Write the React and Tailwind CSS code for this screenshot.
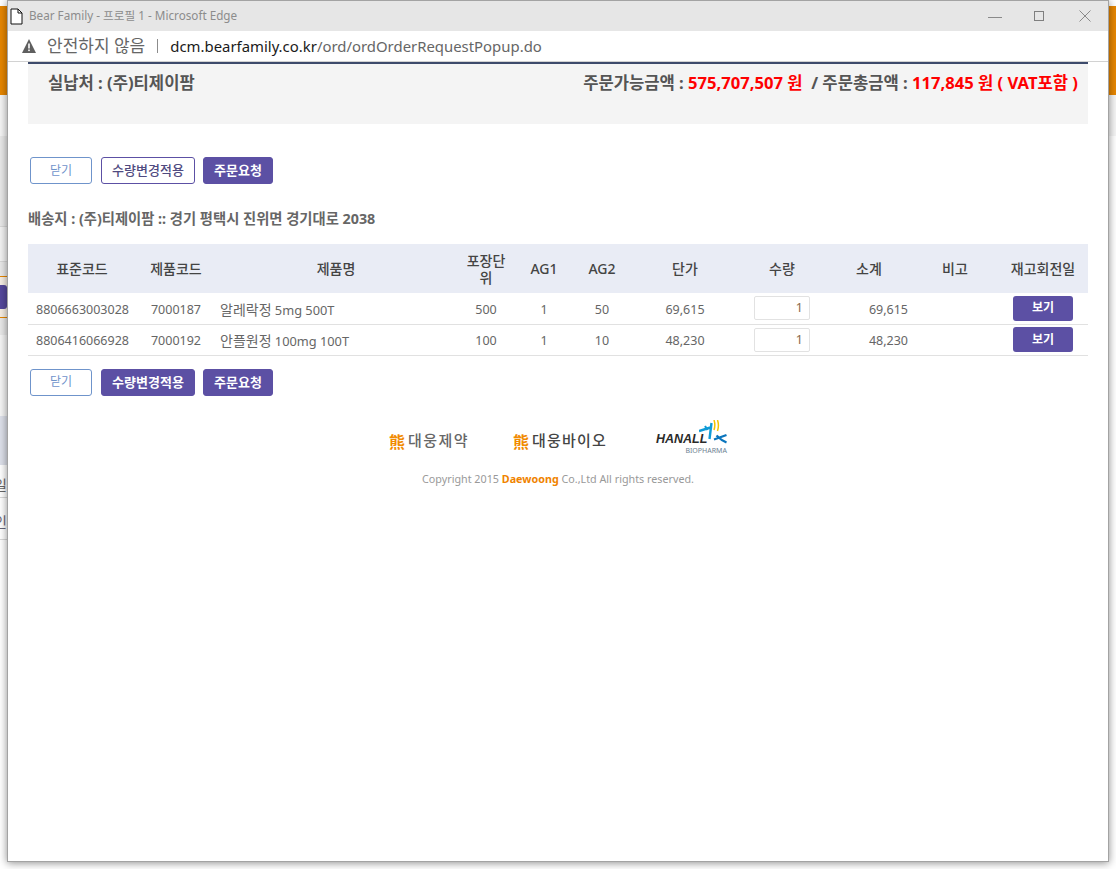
import React from "react";

const FONT = { fontFamily: '"Noto Sans", "Noto Sans CJK KR", sans-serif' };

const rows = [
  { std: "8806663003028", code: "7000187", kr: "알레락정", spec: "5mg 500T", unit: "500", ag1: "1", ag2: "50", price: "69,615", sum: "69,615" },
  { std: "8806416066928", code: "7000192", kr: "안플원정", spec: "100mg 100T", unit: "100", ag1: "1", ag2: "10", price: "48,230", sum: "48,230" },
];

function Bear() {
  return (
    <span className="w-[17px] text-center text-[16px] leading-[18px] font-bold text-[#f18a00]" style={{ fontFamily: '"Noto Sans CJK KR", sans-serif' }}>熊</span>
  );
}

function Hanall() {
  return (
    <svg width="28" height="26" viewBox="0 0 28 26" fill="none">
      <path d="M0 11 L13 7 M12.5 3 L10.5 19" stroke="#0f9bd7" strokeWidth="2.4" />
      <path d="M6 6 L8.5 10" stroke="#0f9bd7" strokeWidth="2" />
      <path d="M15 0 C16 3 16 7 15 10 M18.5 0 C19.5 3 19.5 8 18.5 11" stroke="#f4c400" strokeWidth="1.5" />
      <path d="M15 19.5 L27.5 15 M17.5 15.5 C20 18 24 21 27.5 22.5" stroke="#0a75bd" strokeWidth="2.3" />
    </svg>
  );
}

function Btn({ kind, children, className = "" }) {
  const styles = {
    close: "border-[#6f94cb] text-[#6f94cb] bg-white font-normal text-[12px]",
    outline: "border-[#5c50a4] text-[#4f4a80] bg-white font-medium text-[13px]",
    solid: "border-[#5c50a4] text-white bg-[#5c50a4] font-bold text-[13px]",
  };
  return (
    <button className={`h-[27px] rounded-[3px] border leading-none ${styles[kind]} ${className}`}>{children}</button>
  );
}

function ButtonRow({ second }) {
  return (
    <div className="flex gap-[9px] pl-[2px]">
      <Btn kind="close" className="w-[62px]">닫기</Btn>
      <Btn kind={second} className="w-[94px] mr-[-1px]">수량변경적용</Btn>
      <Btn kind="solid" className="w-[70px]">주문요청</Btn>
    </div>
  );
}

function LeftStrip() {
  return (
    <div className="w-[7px] shrink-0 flex flex-col overflow-hidden">
      <div className="h-[6px] bg-white" />
      <div className="h-[89px] bg-[#e68600]" />
      <div className="h-[41px] bg-[#f5f5f5]" />
      <div className="h-[91px] bg-[#e9e9e9] border-b border-[#d8d8d8]" />
      <div className="h-[35px] bg-[#f3f3f3] border-b border-[#d8d8d8]" />
      <div className="h-[14px] bg-[#e9e9e9]" />
      <div className="h-[42px] bg-[#f6eee4] border-y border-[#e68600] flex items-center">
        <div className="h-[24px] w-full bg-[#55489c] rounded-r-[3px]" />
      </div>
      <div className="h-[17px] bg-[#e9e9e9]" />
      <div className="h-[81px] bg-[#f5f5f5]" />
      <div className="h-[49px] bg-[#dde0ea]" />
      <div className="h-[33px] bg-white border-b border-[#d8d8d8] flex justify-end items-center overflow-hidden pt-[6px]">
        <span className="text-[14px] text-[#666] whitespace-nowrap">일</span>
      </div>
      <div className="h-[42px] bg-white border-b border-[#d8d8d8] flex justify-end items-center overflow-hidden pt-[6px]">
        <span className="text-[14px] text-[#667] whitespace-nowrap">인</span>
      </div>
    </div>
  );
}

function RightStrip() {
  return (
    <div className="w-[7px] shrink-0 flex flex-col">
      <div className="h-[6px] bg-white" />
      <div className="h-[89px] bg-[#e68600]" />
      <div className="h-[41px] bg-[#f5f5f5]" />
    </div>
  );
}

export default function App() {
  return (
    <div className="w-[1116px] h-[869px] flex bg-white overflow-hidden" style={FONT}>
      <LeftStrip />
      <div className="relative z-10 w-[1102px] h-[862px] shrink-0 bg-white border border-[#a3a3a3] shadow-[0_1px_8px_rgba(0,0,0,0.45)] flex flex-col overflow-hidden">
        {/* title bar */}
        <div className="h-[30px] shrink-0 bg-[#e6e6e6] flex items-center">
          <svg className="ml-[2px]" width="13" height="17" viewBox="0 0 13 17" fill="white" stroke="#111" strokeWidth="1">
            <path d="M1 1 H8 L12 5 V16 H1 Z" />
            <path d="M8 1 V5 H12" fill="none" />
          </svg>
          <span className="ml-[6px] text-[11.7px] text-[#8c8c8c]">Bear Family - 프로필 1 - Microsoft Edge</span>
          <div className="ml-auto flex items-center">
            <svg width="14" height="14" viewBox="0 0 14 14" stroke="#8a8a8a" fill="none"><path d="M0 8.5 H14" /></svg>
            <svg className="ml-[31px]" width="12" height="12" viewBox="0 0 12 12" stroke="#7f7f7f" fill="none"><rect x="1.5" y="1.5" width="9" height="9" /></svg>
            <svg className="ml-[33px] mr-[16px]" width="14" height="14" viewBox="0 0 14 14" stroke="#8a8a8a" fill="none"><path d="M1.5 1.5 L12.5 12.5 M12.5 1.5 L1.5 12.5" /></svg>
          </div>
        </div>
        {/* address bar */}
        <div className="h-[31px] shrink-0 bg-white border-b border-[#d2d2d2] flex items-center text-[14.9px]">
          <svg className="ml-[14px]" width="14" height="14" viewBox="0 0 14 14" fill="#5f5f5f">
            <path d="M7 0 L14 14 H0 Z" />
            <rect x="6.2" y="4.5" width="1.6" height="5" fill="white" />
            <rect x="6.2" y="10.5" width="1.6" height="1.6" fill="white" />
          </svg>
          <span className="ml-[11px] text-[#666] text-[17px]">안전하지 않음</span>
          <span className="ml-[12px] w-px h-[14px] bg-[#8c8c8c]" />
          <span className="ml-[12px] text-[#1a1a1a]">dcm.bearfamily.co.kr<span className="text-[#666]">/ord/ordOrderRequestPopup.do</span></span>
        </div>
        {/* content */}
        <div className="px-[20px] flex flex-col">
          <div className="h-[62px] shrink-0 bg-[#f4f4f4] border-t-2 border-[#3d4a6b] flex justify-between pl-[20px] pr-[10px] pt-[7px] text-[16.6px] font-bold text-[#555] leading-[24px]">
            <span>실납처 : (주)티제이팜</span>
            <span>
              주문가능금액 : <span className="text-[#ff0000]">575,707,507 원</span>&nbsp; / 주문총금액 : <span className="text-[#ff0000]">117,845 원 ( VAT포함 )</span>
            </span>
          </div>
          <div className="mt-[33px]"><ButtonRow second="outline" /></div>
          <div className="mt-[24px] h-[22px] text-[14.3px] font-bold text-[#666] leading-[22px]">배송지 : (주)티제이팜 :: 경기 평택시 진위면 경기대로 2038</div>
          <table className="mt-[14px] w-[1060px] table-fixed border-collapse text-[12.5px] text-[#666] text-center">
            <colgroup>
              {[108, 80, 240, 60, 56, 60, 106, 88, 86, 86, 90].map((w, i) => (
                <col key={i} style={{ width: w }} />
              ))}
            </colgroup>
            <thead>
              <tr className="h-[49px] bg-[#e9ecf5] text-[#444] text-[14px]">
                {["표준코드", "제품코드", "제품명"].map((h) => (
                  <th key={h} className="font-medium">{h}</th>
                ))}
                <th className="font-medium px-[6px] leading-[17px]">포장단위</th>
                {["AG1", "AG2", "단가", "수량", "소계", "비고", "재고회전일"].map((h) => (
                  <th key={h} className="font-medium">{h}</th>
                ))}
              </tr>
            </thead>
            <tbody>
              {rows.map((r) => (
                <tr key={r.code} className="h-[31px] border-b border-[#e1e1e1]">
                  <td className="text-left pl-[8px] pt-[4px]">{r.std}</td>
                  <td className="pt-[4px]">{r.code}</td>
                  <td className="text-left pl-[4px] pt-[2px] text-[12.8px]"><span className="text-[14px]">{r.kr}</span> {r.spec}</td>
                  <td className="pt-[4px]">{r.unit}</td>
                  <td className="pt-[4px]">{r.ag1}</td>
                  <td className="pt-[4px]">{r.ag2}</td>
                  <td className="pt-[4px]">{r.price}</td>
                  <td>
                    <div className="mx-auto w-[56px] h-[24px] border border-[#e2e2e2] rounded-[2px] text-right pr-[6px] leading-[22px] text-[#8a6a4a]">1</div>
                  </td>
                  <td className="text-right pr-[4px] pt-[4px]">{r.sum}</td>
                  <td></td>
                  <td>
                    <button className="w-[60px] h-[25px] rounded-[3px] bg-[#5c50a4] text-white text-[12px] font-bold leading-none">보기</button>
                  </td>
                </tr>
              ))}
            </tbody>
          </table>
          <div className="mt-[13px]"><ButtonRow second="solid" /></div>
          <div className="mt-[24px] flex justify-center items-center">
            <div className="flex items-center gap-[2px] text-[15px] tracking-[1.4px] font-medium text-[#666] mt-[6px]"><Bear />대웅제약</div>
            <div className="ml-[44px] flex items-center gap-[2px] text-[15px] tracking-[1.2px] font-medium text-[#444] mt-[6px]"><Bear />대웅바이오</div>
            <div className="ml-[49px] relative h-[36px] w-[71px]">
              <div className="absolute left-0 top-[13px] text-[12.5px] font-bold italic text-[#2a2a2a] leading-none" style={{ fontFamily: '"Liberation Sans", sans-serif' }}>HANALL</div>
              <div className="absolute right-0 top-[27px] text-[7px] text-[#6d8292] leading-none">BIOPHARMA</div>
              <div className="absolute right-0 top-0"><Hanall /></div>
            </div>
          </div>
          <div className="mt-[15px] text-center text-[10.75px] text-[#999] leading-[16px]">
            Copyright 2015 <span className="font-bold text-[#f08300]">Daewoong</span> Co.,Ltd All rights reserved.
          </div>
        </div>
      </div>
      <RightStrip />
    </div>
  );
}
